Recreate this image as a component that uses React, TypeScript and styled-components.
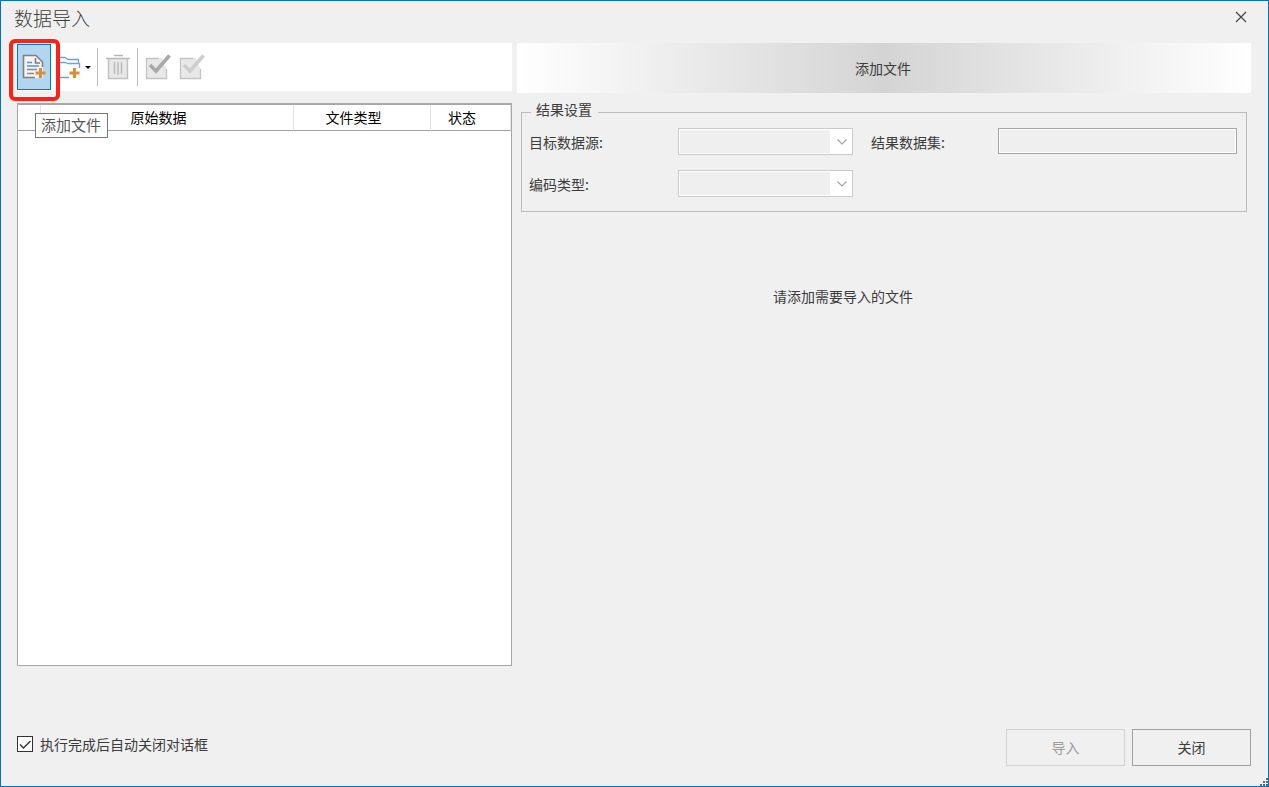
import React from "react";
import styled, { createGlobalStyle } from "styled-components";

const GlobalStyle = createGlobalStyle`
  *, *::before, *::after { box-sizing: border-box; }
  body {
    margin: 0;
    background: #f0f0f0;
    color: #3b3b3b;
    font: 14px/20px "Noto Sans CJK SC", sans-serif;
  }
  button, input, select { font: inherit; color: inherit; margin: 0; }
`;

const Dialog = styled.main`
  position: relative;
  display: flex;
  flex-direction: column;
  min-height: 100vh;
  border: 1px solid #0073c5;
`;

const TitleBar = styled.header`
  display: flex;
  justify-content: space-between;
  align-items: center;
  height: 32px;
  margin-bottom: 10px;
  padding: 0 20px 0 13px;
`;

const Title = styled.h1`
  margin: 2px 0 0;
  font-size: 19px;
  line-height: 28px;
  font-weight: 300;
`;

const CloseIconButton = styled.button`
  display: flex;
  padding: 1px;
  border: 0;
  background: none;
`;

const Content = styled.div`
  flex: 1;
  display: grid;
  grid-template-columns: minmax(0, 495fr) minmax(0, 734fr);
  column-gap: 5px;
  padding: 0 17px 0 16px;
`;

const Column = styled.section`
  display: flex;
  flex-direction: column;
`;

const Toolbar = styled.div`
  display: flex;
  align-items: center;
  height: 48px;
  margin-bottom: 12px;
  background: #fff;
`;

const ToolButton = styled.button<{ $active?: boolean }>`
  position: relative;
  display: flex;
  align-items: center;
  justify-content: center;
  width: 34px;
  height: 46px;
  padding: 0;
  border: 1px solid ${(p) => (p.$active ? "#0078d7" : "transparent")};
  background: ${(p) => (p.$active ? "#b1d6f0" : "none")};
`;

const FolderButton = styled(ToolButton)`
  width: 44px;
  gap: 4px;
`;

const Separator = styled.span`
  width: 1px;
  height: 38px;
  margin: 0 3px 0 2px;
  background: #bcbcbc;
`;

const Highlight = styled.span`
  position: absolute;
  z-index: 1;
  inset: -6px -10px -12px -9px;
  border: 4px solid #fd2117;
  border-radius: 6px;
`;

const Tooltip = styled.span`
  position: absolute;
  z-index: 2;
  top: 68px;
  left: 17px;
  padding: 0 6px 1px 5px;
  border: 1px solid #767676;
  background: #fff;
  color: #575757;
  font-size: 15px;
  line-height: 22px;
  white-space: nowrap;
`;

const FilePanel = styled.div`
  flex: 1;
  border: 1px solid #a6a6ab;
  border-top-width: 2px;
  background: #fff;
`;

const FileTable = styled.table`
  width: 100%;
  table-layout: fixed;
  border-collapse: separate;
  border-spacing: 0;
`;

const HeadCell = styled.th<{ $width?: string }>`
  width: ${(p) => p.$width ?? "auto"};
  height: 26px;
  padding: 0 17px 2px 0;
  border-bottom: 1px solid #a0a0a0;
  border-right: 1px solid #e2e2e2;
  color: #000;
  font-weight: 400;
`;

const Banner = styled.h2`
  display: flex;
  align-items: center;
  justify-content: center;
  height: 50px;
  margin: 0 0 6px;
  padding-right: 2px;
  background: linear-gradient(90deg, #fff, #d4d4d4 50%, #fff);
  font-size: 14px;
  font-weight: 400;
`;

const Settings = styled.fieldset`
  display: grid;
  grid-template-columns: 149px minmax(0, 175fr) 145px minmax(0, 239fr);
  row-gap: 15px;
  min-width: 0;
  height: 113px;
  margin: 0 4px;
  padding: 3px 9px 14px 7px;
  border: 1px solid #bcbcbc;
`;

const Legend = styled.legend`
  margin-left: 2px;
  padding: 0 6px 6px 5px;
`;

const FieldLabel = styled.label<{ $second?: boolean }>`
  align-self: center;
  padding-left: ${(p) => (p.$second ? "18px" : "0")};
`;

const SelectFrame = styled.div`
  position: relative;
  height: 27px;
  border: 1px solid #cacaca;
  background: #fff;
`;

const Select = styled.select`
  display: block;
  width: 100%;
  height: 100%;
  padding: 0;
  border: 1px solid #fff;
  border-right-width: 22px;
  border-radius: 0;
  background: #efefef;
  appearance: none;
  opacity: 1;
`;

const SelectArrow = styled.svg`
  position: absolute;
  top: 9px;
  right: 4px;
  pointer-events: none;
`;

const TextInput = styled.input`
  width: 100%;
  height: 26px;
  padding: 0 4px;
  border: 1px solid #a6a6a6;
  background: #efefef;
  box-shadow: inset 0 0 0 1px #fff;
`;

const EmptyHint = styled.p`
  margin: 74px 82px 0 0;
  text-align: center;
`;

const Footer = styled.footer`
  display: flex;
  justify-content: space-between;
  align-items: center;
  padding: 63px 17px 20px 16px;
`;

const CheckLabel = styled.label`
  display: flex;
  align-items: center;
  gap: 7px;
  margin-bottom: 7px;
`;

const CheckBox = styled.input`
  width: 16px;
  height: 16px;
  border: 1px solid #333;
  background: #fff
    url("data:image/svg+xml,%3Csvg xmlns='http://www.w3.org/2000/svg' width='14' height='14'%3E%3Cpath d='M2 7.5 5.5 11 12.5 4' fill='none' stroke='%23333' stroke-width='1.4'/%3E%3C/svg%3E")
    center no-repeat;
  appearance: none;
`;

const Actions = styled.div`
  display: flex;
  gap: 7px;
`;

const ActionButton = styled.button`
  width: 119px;
  height: 37px;
  padding: 0 0 2px;
  border: 1px solid #a0a0a0;
  background: #f0f0f0;
  &:disabled {
    border-color: #d2d2d2;
    color: #9b9b9b;
  }
`;

const ResizeGrip = styled.svg`
  position: absolute;
  right: 0;
  bottom: 0;
`;

const AddFileIcon = () => (
  <svg width="24" height="26" viewBox="0 0 24 26" fill="none">
    <path d="M1 1h13l7 7v16H1z" fill="#f3f3f3" />
    <path d="M13 23.500H1.500V1.500H14L20.500 8V13M13.500 4v5H18" stroke="#7f7f7f" strokeWidth="1.600" />
    <path d="M5 8.500h5M5 12h12" stroke="#5b93cc" strokeWidth="1.300" />
    <path d="M5 15.500h10M5 19.500h7" stroke="#8a8a8a" strokeWidth="1.300" />
    <path d="M18.500 14v10M13.500 19h10" stroke="#e08c36" strokeWidth="3" />
  </svg>
);

const AddFolderIcon = () => (
  <svg width="25" height="26" viewBox="0 0 25 26" fill="none">
    <path d="M13 23.500H1.500V3.500H9L12 5.500H22.500V9M1.500 8.500H9L12 9.500H23.500V14" stroke="#6ca4d8" strokeWidth="1.300" />
    <path d="M18.500 14v10M13.500 19h10" stroke="#e08c36" strokeWidth="3" />
  </svg>
);

const TrashIcon = () => (
  <svg width="24" height="26" viewBox="0 0 24 26" fill="none">
    <path d="M2.500 5v19.500h19V5" fill="#e8e8e8" stroke="#c0c0c0" strokeWidth="1.400" />
    <path d="M0 4.500h24M8 1.500h9M8.500 8v12M12 8v13M15.500 8v12" stroke="#b9b9b9" strokeWidth="1.400" />
  </svg>
);

const CheckIcon = ({ tone }: { tone: string }) => (
  <svg width="26" height="26" viewBox="0 0 26 26" fill="none">
    <path d="M1 4h16l4 10v11H1z" fill="#e8e8e8" />
    <path d="M14 4.500H1.500V24.500H21.500V15" stroke="#c4c4c4" strokeWidth="1.300" />
    <path d="M5 11l6 6L24.500 1.500" stroke={tone} strokeWidth="3.600" />
  </svg>
);

const DropDown = ({ id }: { id: string }) => (
  <SelectFrame>
    <Select id={id} disabled />
    <SelectArrow width="12" height="8" viewBox="0 0 12 8" fill="none">
      <path d="M1.500 1.500 6 6l4.500-4.500" stroke="#a0a0a0" strokeWidth="1.100" />
    </SelectArrow>
  </SelectFrame>
);

export default function App() {
  return (
    <Dialog>
      <GlobalStyle />
      <TitleBar>
        <Title>数据导入</Title>
        <CloseIconButton aria-label="关闭窗口">
          <svg width="12" height="12" viewBox="0 0 12 12">
            <path d="M1 1l10 10M11 1L1 11" stroke="#444" strokeWidth="1.200" />
          </svg>
        </CloseIconButton>
      </TitleBar>
      <Content>
        <Column>
          <Toolbar>
            <ToolButton $active aria-describedby="add-file-tip" aria-label="添加文件">
              <AddFileIcon />
              <Highlight />
              <Tooltip id="add-file-tip" role="tooltip">添加文件</Tooltip>
            </ToolButton>
            <FolderButton aria-label="添加文件夹">
              <AddFolderIcon />
              <svg width="6" height="3" viewBox="0 0 6 3">
                <path d="M0 0h6L3 3z" fill="#000" />
              </svg>
            </FolderButton>
            <Separator />
            <ToolButton aria-label="删除"><TrashIcon /></ToolButton>
            <Separator />
            <ToolButton aria-label="全选"><CheckIcon tone="#a9a9a9" /></ToolButton>
            <ToolButton aria-label="反选"><CheckIcon tone="#cecece" /></ToolButton>
          </Toolbar>
          <FilePanel>
            <FileTable>
              <thead>
                <tr>
                  <HeadCell $width="23px" aria-label="序号" />
                  <HeadCell>原始数据</HeadCell>
                  <HeadCell $width="137px">文件类型</HeadCell>
                  <HeadCell $width="80px">状态</HeadCell>
                </tr>
              </thead>
            </FileTable>
          </FilePanel>
        </Column>
        <Column>
          <Banner>添加文件</Banner>
          <Settings>
            <Legend>结果设置</Legend>
            <FieldLabel htmlFor="source">目标数据源:</FieldLabel>
            <DropDown id="source" />
            <FieldLabel $second htmlFor="dataset">结果数据集:</FieldLabel>
            <TextInput id="dataset" disabled />
            <FieldLabel htmlFor="encoding">编码类型:</FieldLabel>
            <DropDown id="encoding" />
          </Settings>
          <EmptyHint>请添加需要导入的文件</EmptyHint>
        </Column>
      </Content>
      <Footer>
        <CheckLabel>
          <CheckBox type="checkbox" defaultChecked />
          执行完成后自动关闭对话框
        </CheckLabel>
        <Actions>
          <ActionButton disabled>导入</ActionButton>
          <ActionButton>关闭</ActionButton>
        </Actions>
      </Footer>
      <ResizeGrip width="8" height="8" viewBox="0 0 8 8" fill="#666">
        <path d="M6 0h2v2H6zM3 3h2v2H3zM6 3h2v2H6zM0 6h2v2H0zM3 6h2v2H3zM6 6h2v2H6z" />
      </ResizeGrip>
    </Dialog>
  );
}
